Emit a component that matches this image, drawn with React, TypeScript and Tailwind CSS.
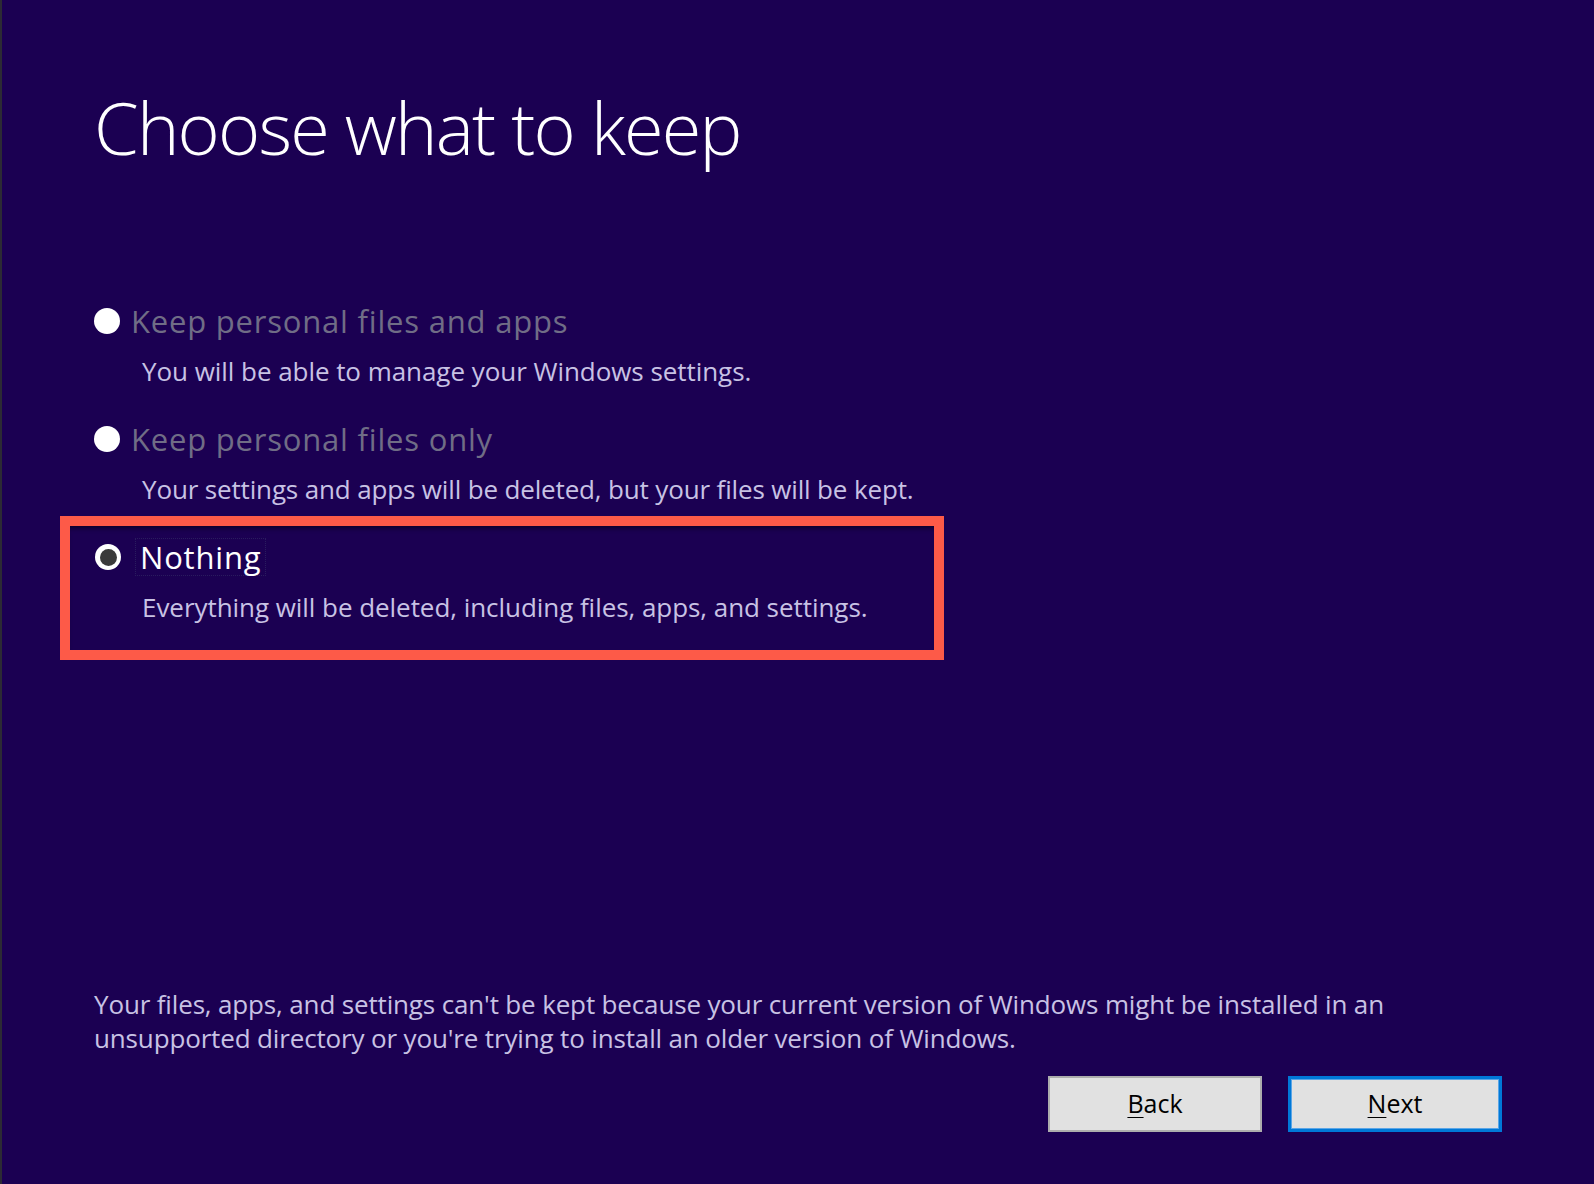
import React from "react";

const font = { fontFamily: '"Open Sans", "Noto Sans", sans-serif' } as const;

function Radio({ selected }: { selected?: boolean }) {
  if (selected) {
    return (
      <span className="flex h-[26px] w-[26px] shrink-0 items-center justify-center rounded-full bg-white">
        <span className="h-[17px] w-[17px] rounded-full bg-[#3a3a3a]" />
      </span>
    );
  }
  return <span className="h-[26px] w-[26px] shrink-0 rounded-full bg-white" />;
}

export default function App() {
  return (
    <div
      className="flex h-[1184px] w-[1594px] flex-col border-l-2 border-[#2c2a34] bg-[#1b0052] pl-[92px] pr-[92px] pb-[52px]"
      style={font}
    >
      <h1 className="mt-[91px] h-[72px] text-[72px] font-light leading-none tracking-[-1.8px] text-white">
        Choose what to keep
      </h1>

      <div className="mt-[138px] flex flex-col">
        {/* Option 1 */}
        <div className="flex flex-col">
          <div className="flex h-[40px] items-center gap-[11px]">
            <Radio />
            <span className="text-[31px] leading-[40px] tracking-[0.8px] text-[#706d86]">
              Keep personal files and apps
            </span>
          </div>
          <p className="mt-[13px] pl-[48px] text-[26px] leading-[34px] tracking-[-0.05px] text-[#c8c2e4]">
            You will be able to manage your Windows settings.
          </p>
        </div>

        {/* Option 2 */}
        <div className="mt-[31px] flex flex-col">
          <div className="flex h-[40px] items-center gap-[11px]">
            <Radio />
            <span className="text-[31px] leading-[40px] tracking-[0.8px] text-[#706d86]">
              Keep personal files only
            </span>
          </div>
          <p className="mt-[13px] pl-[48px] text-[26px] leading-[34px] tracking-[-0.15px] text-[#c8c2e4]">
            Your settings and apps will be deleted, but your files will be kept.
          </p>
        </div>

        {/* Option 3 (highlighted) */}
        <div className="-ml-[34px] mt-[10px] flex w-[884px] flex-col border-[10px] border-[#fd5a48] pl-[25px] pt-[11px] pb-[26px] shadow-[inset_0_5px_5px_-3px_rgba(0,0,0,0.55)]">
          <div className="flex h-[40px] items-center gap-[14px]">
            <Radio selected />
            <span className="border border-dotted border-[#2a1c5e] px-[4px] text-[31px] leading-[36px] tracking-[0.8px] text-white">
              Nothing
            </span>
          </div>
          <p className="mt-[13px] pl-[47px] text-[26px] leading-[34px] tracking-[-0.05px] text-[#c8c2e4]">
            Everything will be deleted, including files, apps, and settings.
          </p>
        </div>
      </div>

      <div className="flex-1" />

      <p className="whitespace-nowrap text-[26px] leading-[34px] tracking-[-0.15px] text-[#c8c2e4]">
        Your files, apps, and settings can't be kept because your current version of Windows might be installed in an
        <br />
        unsupported directory or you're trying to install an older version of Windows.
      </p>

      <div className="mt-[21px] flex justify-end gap-[26px]">
        <button className="flex h-[56px] w-[214px] items-center justify-center border-2 border-[#adadad] bg-[#e1e1e1] text-[25px] tracking-[0px] text-black">
          <span>
            <span className="underline decoration-1 underline-offset-4">B</span>ack
          </span>
        </button>
        <button className="flex h-[56px] w-[214px] items-center justify-center border-[3px] border-[#0078d7] bg-[#e1e1e1] text-[25px] tracking-[0px] text-black shadow-[inset_0_0_0_1px_#5aa5e6]">
          <span>
            <span className="underline decoration-1 underline-offset-4">N</span>ext
          </span>
        </button>
      </div>
    </div>
  );
}
